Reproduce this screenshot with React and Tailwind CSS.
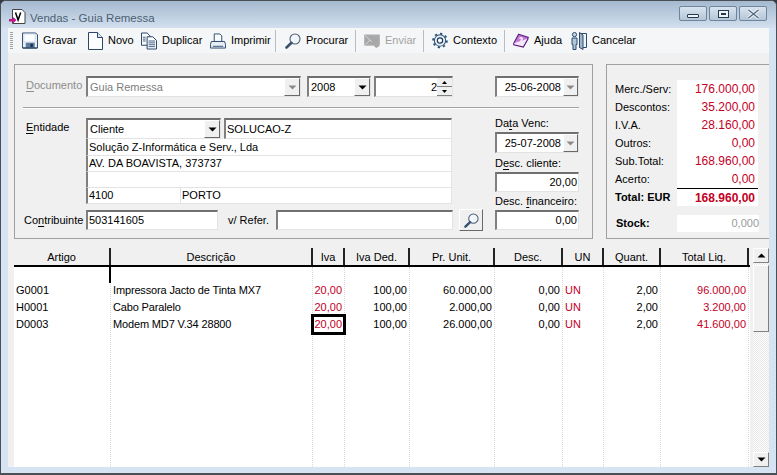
const RED = "text-[#c4001f]";

function Sunken({ className = "", children }) {
  return (
    <div className={`border-t-2 border-l-2 border-t-[#707070] border-l-[#808080] border-b border-r border-b-[#e3e3e3] border-r-[#e3e3e3] bg-white flex items-center overflow-hidden ${className}`}>
      {children}
    </div>
  );
}

function Arrow({ gray }) {
  return (
    <svg width="9" height="5" viewBox="0 0 9 5">
      <path d="M0.5 0.5h8L4.5 4.5z" fill={gray ? "#8a8a8a" : "#000"} />
    </svg>
  );
}

function DropBtn({ gray, className = "w-[16px]" }) {
  return (
    <div className={`h-full shrink-0 ml-auto bg-[#f0f0f0] border-t border-l border-t-white border-l-white border-r border-b border-r-[#696969] border-b-[#696969] flex items-center justify-center ${className}`}>
      <Arrow gray={gray} />
    </div>
  );
}

function DateField({ value }) {
  return (
    <Sunken className="w-[84px] h-[21px]">
      <span className="flex-1 text-right pr-[2px]">{value}</span>
      <DropBtn gray className="w-[15px] border-r-[#9a9a9a] border-b-[#9a9a9a]" />
    </Sunken>
  );
}

function U({ children }) {
  return <span className="underline underline-offset-2">{children}</span>;
}

const Floppy = () => (
  <svg width="17" height="17" viewBox="0 0 17 17">
    <path d="M.5 .5h14l2 2v14H.5z" fill="#e8eff6" stroke="#2a4668" />
    <path d="M2 1.500h12v8.500H2z" fill="#fbfdff" stroke="#c2d0de" strokeWidth=".7" />
    <path d="M4 11h9.500v5.500H4z" fill="#5c7a9c" />
    <path d="M9 12h2.500v3.500H9z" fill="#17324f" />
    <path d="M1 16.500h15" stroke="#17324f" />
  </svg>
);
const Page = () => (
  <svg width="15" height="18" viewBox="0 0 15 18">
    <path d="M.5 .5h9l5 5v12H.5z" fill="#fbfdff" stroke="#2a4668" />
    <path d="M9.500 .5v5h5" fill="#dbe5ef" stroke="#2a4668" />
  </svg>
);
const Dup = () => (
  <svg width="17" height="18" viewBox="0 0 17 18">
    <path d="M.5 .5h6l3 3v10h-9z" fill="#f8fbfe" stroke="#1f3a5c" />
    <path d="M6.500 4.500h6l4 4v9h-10z" fill="#fbfdff" stroke="#1f3a5c" />
    <path d="M8 9h7M8 11h7M8 13h7M8 15h7M2 5h3M2 7h3M2 9h3" stroke="#3b5a7d" />
  </svg>
);
const Printer = () => (
  <svg width="17" height="16" viewBox="0 0 17 16">
    <path d="M4.500 .5h6l2 2v6h-8z" fill="#fbfdff" stroke="#2a4668" />
    <path d="M1.500 8.500h14l1 3v4H.5v-4z" fill="#e6edf4" stroke="#2a4668" />
    <path d="M3 13h11v1.500H3z" fill="#5d7896" />
  </svg>
);
const Lens = ({ size = 16 }) => (
  <svg width={size} height={size} viewBox="0 0 16 16">
    <circle cx="10" cy="6" r="5" fill="#f2f6fa" stroke="#4a5e75" strokeWidth="1.100" />
    <path d="M6.500 9.800 1.500 14.500" stroke="#3a5270" strokeWidth="2.600" strokeLinecap="round" />
  </svg>
);
const Mail = () => (
  <svg width="17" height="16" viewBox="0 0 17 16">
    <path d="M.5 1.500h16v11h-16z" fill="#a8a8a8" stroke="#b5b5b5" />
    <path d="M1 2l7.500 7M1.500 12l5-5" stroke="#d9d9d9" fill="none" />
    <path d="M10 12.500h6v1l-3 2z" fill="#a5a5a5" />
  </svg>
);
const Gear = () => (
  <svg width="17" height="17" viewBox="0 0 17 17">
    <circle cx="8.500" cy="8.500" r="6" fill="#e6eef6" stroke="#2f5379" strokeWidth="1.100" />
    <circle cx="8.500" cy="8.500" r="7.300" fill="none" stroke="#2f5379" strokeWidth="2" strokeDasharray="2.400 3.300" />
    <circle cx="8.500" cy="8.500" r="2.800" fill="#fff" stroke="#1f3a5c" strokeWidth="1.300" />
  </svg>
);
const Book = () => (
  <svg width="17" height="15" viewBox="0 0 17 15">
    <path d="M6 .8 16.200 4.200 11 13.800.8 10.400z" fill="#c27bd9" stroke="#5f1d82" strokeWidth="1.200" />
    <path d="M.8 10.400v1.600L11 14.500l5.200-9.200" fill="#f4e8f8" stroke="#5f1d82" strokeWidth="1.200" />
    <path d="M7 5.500c1-1.400 3.300-.7 2.700.7-.3.800-1.200.8-1.500 1.700" fill="none" stroke="#fff" strokeWidth="1.300" />
  </svg>
);
const Leave = () => (
  <svg width="16" height="18" viewBox="0 0 16 18">
    <circle cx="3.500" cy="2.600" r="2.100" fill="#c6d5e4" stroke="#2c4a6b" />
    <path d="M1 6h5v6.500H5v5H2v-5H1z" fill="#b3c7db" stroke="#2c4a6b" />
    <path d="M8.500 1.500h7v14h-7z" fill="#f2f6fa" stroke="#2c4a6b" />
    <path d="M8.500 .5l3.500 2.500v14.500l-3.500-2z" fill="#9cb5cd" stroke="#2c4a6b" />
  </svg>
);
const TitleIcon = () => (
  <svg width="17" height="16" viewBox="0 0 17 16">
    <path d="M3.500 .5h9.500l3 3v11h-12.500z" fill="#fff" stroke="#444" />
    <path d="M6.500 3.500l2.600 7.500 2.600-7.500" fill="none" stroke="#000" strokeWidth="1.500" />
    <path d="M0 10h4V8l3.500 3L4 14.500V12.500H0z" fill="#c2188f" />
  </svg>
);

const tools = [
  { icon: <Floppy />, label: "Gravar", w: "w-[65px]", ml: "ml-[9px]" },
  { icon: <Page />, label: "Novo", w: "w-[54px]" },
  { icon: <Dup />, label: "Duplicar", w: "w-[69px]" },
  { icon: <Printer />, label: "Imprimir", w: "w-[65px]" },
  { sep: "mr-[9px]" },
  { icon: <Lens />, label: "Procurar", w: "w-[70px]" },
  { sep: "mr-[8px]" },
  { icon: <Mail />, label: "Enviar", w: "w-[59px]", gray: true },
  { sep: "mr-[8px]" },
  { icon: <Gear />, label: "Contexto", w: "w-[72px]" },
  { sep: "mr-[8px]" },
  { icon: <Book />, label: "Ajuda", w: "w-[58px]" },
  { icon: <Leave />, label: "Cancelar", w: "w-[70px]" },
];

function Toolbar() {
  return (
    <div className="h-[25px] bg-[#f5f6f7] flex items-center">
      <div className="w-[3px] h-[17px] ml-[2px] bg-[repeating-linear-gradient(#a0a0a0_0_1px,#f5f6f7_1px_2px)] shrink-0" />
      {tools.map((t, i) =>
        t.sep ? (
          <div key={i} className={`w-px h-[22px] bg-[#b9bcc0] shrink-0 ${t.sep}`} />
        ) : (
          <div key={i} className={`flex items-center shrink-0 ${t.w} ${t.ml || ""} ${t.gray ? "text-[#a3a3a3]" : ""}`}>
            <div className="w-[16px] flex justify-center shrink-0">{t.icon}</div>
            <span className="ml-[5px]">{t.label}</span>
          </div>
        )
      )}
    </div>
  );
}

function WinBtn({ children }) {
  return (
    <div className="w-[28px] h-[15px] rounded-[2px] border border-[#6f859c] bg-gradient-to-b from-[#d8e3ee] to-[#b5c6d8] flex items-center justify-center">
      {children}
    </div>
  );
}

function DocPanel() {
  return (
    <div className="w-[579px] h-[175px] border border-[#a0a0a0] bg-[#f0f0f0] pt-[11px] pl-[8px] pr-[13px]">
      <div className="flex items-center h-[21px]">
        <span className="w-[63px] pl-[3px] -mt-[3px] text-[#8d8d8d]"><U>D</U>ocumento</span>
        <Sunken className="w-[215px] h-full text-[#7d7d7d] pl-[2px]">
          <span>Guia Remessa</span>
          <DropBtn gray />
        </Sunken>
        <Sunken className="w-[64px] h-full ml-[6px] pl-[2px]">
          <span>2008</span>
          <DropBtn />
        </Sunken>
        <Sunken className="w-[79px] h-full ml-[3px]">
          <span className="flex-1 text-right">2</span>
          <div className="w-[15px] h-full flex flex-col shrink-0">
            <div className="flex-1 bg-[#f0f0f0] border-b border-[#808080] flex items-center justify-center">
              <svg width="5" height="3"><path d="M2.500 0 5 3H0z" /></svg>
            </div>
            <div className="flex-1 bg-[#f0f0f0] border-b border-[#808080] flex items-center justify-center">
              <svg width="5" height="3"><path d="M0 0h5L2.500 3z" /></svg>
            </div>
          </div>
        </Sunken>
        <div className="ml-[42px]"><DateField value="25-06-2008" /></div>
      </div>

      <div className="h-px bg-[#a0a0a0] mt-[10px] mb-[9px] border-b border-white box-content" />

      <div className="flex">
        <div className="w-[460px]">
          <div className="flex">
            <div className="w-[63px] pl-[3px] pt-[1px]"><U>E</U>ntidade</div>
            <div className="w-[366px]">
              <div className="flex h-[21px]">
                <Sunken className="w-[135px] h-full pl-[2px]">
                  <span>Cliente</span>
                  <DropBtn />
                </Sunken>
                <Sunken className="flex-1 ml-[3px] h-full pl-px">SOLUCAO-Z</Sunken>
              </div>
              <Sunken className="h-[17px] pl-px !border-t-0">Solução Z-Informática e Serv., Lda</Sunken>
              <Sunken className="h-[16px] pl-px !border-t-0">AV. DA BOAVISTA, 373737</Sunken>
              <Sunken className="h-[16px] !border-t-0" />
              <div className="flex h-[16px]">
                <Sunken className="w-[95px] h-full pl-px !border-t-0">4100</Sunken>
                <Sunken className="flex-1 h-full pl-px !border-t-0 !border-l-0">PORTO</Sunken>
              </div>
            </div>
          </div>
          <div className="flex items-center mt-[5px] h-[22px]">
            <div className="w-[63px] pl-px whitespace-nowrap">Co<U>n</U>tribuinte</div>
            <Sunken className="w-[132px] h-[20px] pl-px">503141605</Sunken>
            <span className="ml-[10px] w-[48px]">v/ Refer.</span>
            <Sunken className="w-[177px] h-[20px]" />
            <div className="w-[24px] h-[22px] ml-[6px] bg-[#f0f0f0] border border-t-white border-l-white border-r-[#696969] border-b-[#696969] flex items-center justify-center shrink-0">
              <Lens size={15} />
            </div>
          </div>
        </div>
        <div className="ml-[12px] w-[85px] -mt-[2px]">
          <div className="leading-[14px] h-[16px]">Da<U>t</U>a Venc:</div>
          <DateField value="25-07-2008" />
          <div className="mt-[3px] h-[16px] leading-[14px]">D<U>e</U>sc. cliente:</div>
          <Sunken className="w-[84px] h-[20px]"><span className="flex-1 text-right pr-[1px]">20,00</span></Sunken>
          <div className="h-[18px] leading-[18px] whitespace-nowrap">Desc. <U>f</U>inanceiro:</div>
          <Sunken className="w-[84px] h-[20px]"><span className="flex-1 text-right pr-[1px]">0,00</span></Sunken>
        </div>
      </div>
    </div>
  );
}

const totals = [
  ["Merc./Serv:", "176.000,00"],
  ["Descontos:", "35.200,00"],
  ["I.V.A.", "28.160,00"],
  ["Outros:", "0,00"],
  ["Sub.Total:", "168.960,00"],
  ["Acerto:", "0,00"],
];

function TotalsPanel() {
  return (
    <div className="flex-1 h-[175px] border-t border-b border-l border-[#a0a0a0] bg-[#f0f0f0] pt-[15px] pl-[8px]">
      {totals.map(([l, v]) => (
        <div key={l} className="flex h-[18px] items-center">
          <span className="w-[62px]">{l}</span>
          <span className={`w-[81px] h-full bg-white flex items-center justify-end pr-[3px] text-[12px] ${RED}`}>{v}</span>
        </div>
      ))}
      <div className="flex h-[18px] items-center font-bold">
        <span className="w-[62px] whitespace-nowrap">Total: EUR</span>
        <span className={`w-[81px] h-full bg-white border-t border-black flex items-center justify-end pr-[3px] text-[12px] ${RED}`}>168.960,00</span>
      </div>
      <div className="flex h-[17px] items-center mt-[9px] font-bold">
        <span className="w-[62px] pl-px">Stock:</span>
        <span className="w-[82px] h-full bg-white flex items-center justify-end font-normal text-[#9a9a9a]">0,000</span>
      </div>
    </div>
  );
}

const cols = [
  { h: "Artigo", w: "w-[97px]", align: "text-left pl-[2px]", v: ["G0001", "H0001", "D0003"] },
  { h: "Descrição", w: "w-[202px]", align: "text-left pl-[2px] tracking-[-0.15px]", v: ["Impressora Jacto de Tinta MX7", "Cabo Paralelo", "Modem MD7 V.34 28800"] },
  { h: "Iva", w: "w-[32px]", align: "text-right pr-[2px]", color: RED, v: ["20,00", "20,00", "20,00"], sel: 2 },
  { h: "Iva Ded.", w: "w-[65px]", align: "text-right pr-[2px]", v: ["100,00", "100,00", "100,00"] },
  { h: "Pr. Unit.", w: "w-[85px]", align: "text-right pr-[2px]", v: ["60.000,00", "2.000,00", "26.000,00"] },
  { h: "Desc.", w: "w-[68px]", align: "text-right pr-[2px]", v: ["0,00", "0,00", "0,00"] },
  { h: "UN", w: "w-[41px]", align: "text-left pl-[2px]", color: RED, v: ["UN", "UN", "UN"] },
  { h: "Quant.", w: "w-[57px]", align: "text-right pr-[2px]", v: ["2,00", "2,00", "2,00"] },
  { h: "Total Liq.", w: "w-[88px]", align: "text-right pr-[2px]", color: RED, v: ["96.000,00", "3.200,00", "41.600,00"] },
];

function Grid() {
  return (
    <div className="flex mt-[9px] h-[219px]">
      <div className="w-[736px] flex flex-col">
        <div className="flex h-[17px] border-b-2 border-black box-content bg-[#f0f0f0]">
          {cols.map((c) => (
            <div key={c.h} className={`${c.w} text-center border-r-2 border-[#222] leading-[19px] shrink-0`}>{c.h}</div>
          ))}
        </div>
        <div className="flex flex-1 bg-white">
          {cols.map((c, ci) => (
            <div key={c.h} className={`${c.w} shrink-0 border-r border-dotted border-[#d9d9d9] pt-[15px] relative`}>
              {ci === 0 && <div className="absolute right-[-1px] top-0 w-[2px] h-[16px] bg-black" />}
              {c.v.map((val, i) => (
                <div key={i} className={`h-[17px] leading-[17px] whitespace-nowrap ${c.align} ${c.color || ""} ${c.sel === i ? "outline-[3px] outline-black -outline-offset-1 relative" : ""}`}>
                  {val}
                </div>
              ))}
            </div>
          ))}
        </div>
      </div>
      <div className="w-[3px] bg-[#f0f0f0]" />
      <div className="w-[16px] flex flex-col bg-[repeating-conic-gradient(#e6e6e6_0_25%,#ffffff_0_50%)] bg-[length:2px_2px]">
        <div className="h-[15px] bg-[#f0f0f0] border border-t-white border-l-white border-r-[#808080] border-b-[#808080] flex items-center justify-center">
          <svg width="9" height="5" viewBox="0 0 9 5"><path d="M4.500 .5l4 4h-8z" /></svg>
        </div>
        <div className="h-[67px] mt-[2px] bg-[#f0f0f0] border border-t-white border-l-white border-r-[#808080] border-b-[#808080]" />
        <div className="mt-auto h-[15px] bg-[#f0f0f0] border border-t-white border-l-white border-r-[#808080] border-b-[#808080] flex items-center justify-center">
          <Arrow />
        </div>
      </div>
    </div>
  );
}

export default function App() {
  return (
    <div
      className="w-[777px] h-[475px] overflow-hidden bg-[#343a40] text-[11px] text-black"
      style={{ fontFamily: '"Liberation Sans", Arial, sans-serif' }}
    >
      <div className="h-full border border-[#4a4f55] rounded-t-[6px] border-b-2 bg-[#d6e3f2] flex flex-col overflow-hidden">
        <div className="h-[27px] shrink-0 bg-gradient-to-b from-[#a5b9cf] to-[#d2e0ef] flex items-center pl-[8px] pr-[9px]">
          <div className="mt-[5px]"><TitleIcon /></div>
          <span className="ml-[4px] mt-[8px] text-[11.5px] text-[#4d5f73]">Vendas - Guia Remessa</span>
          <div className="ml-auto flex gap-[2px] -mt-[2px]">
            <WinBtn><div className="w-[12px] h-[4px] bg-[#eef3f8] border border-[#26384c] rounded-[1px] mt-[5px]" /></WinBtn>
            <WinBtn><div className="w-[11px] h-[8px] border border-[#26384c] bg-[#eef3f8] flex items-center justify-center"><div className="w-[5px] h-[2px] bg-[#26384c]" /></div></WinBtn>
            <WinBtn>
              <svg width="13" height="10" viewBox="0 0 13 10">
                <path d="M1.500 1 11.500 9M11.500 1 1.500 9" stroke="#e9eff5" strokeWidth="3.400" />
                <path d="M1.500 1 11.500 9M11.500 1 1.500 9" stroke="#4f657d" strokeWidth="1.200" />
              </svg>
            </WinBtn>
          </div>
        </div>
        <div className="mx-[7px] flex-1 flex flex-col min-h-0">
          <Toolbar />
          <div className="h-[414px] bg-[#f0f0f0] px-[6px] pt-[11px] pr-0">
            <div className="flex h-[175px]">
              <DocPanel />
              <div className="w-[13px]" />
              <TotalsPanel />
            </div>
            <Grid />
          </div>
        </div>
      </div>
    </div>
  );
}
